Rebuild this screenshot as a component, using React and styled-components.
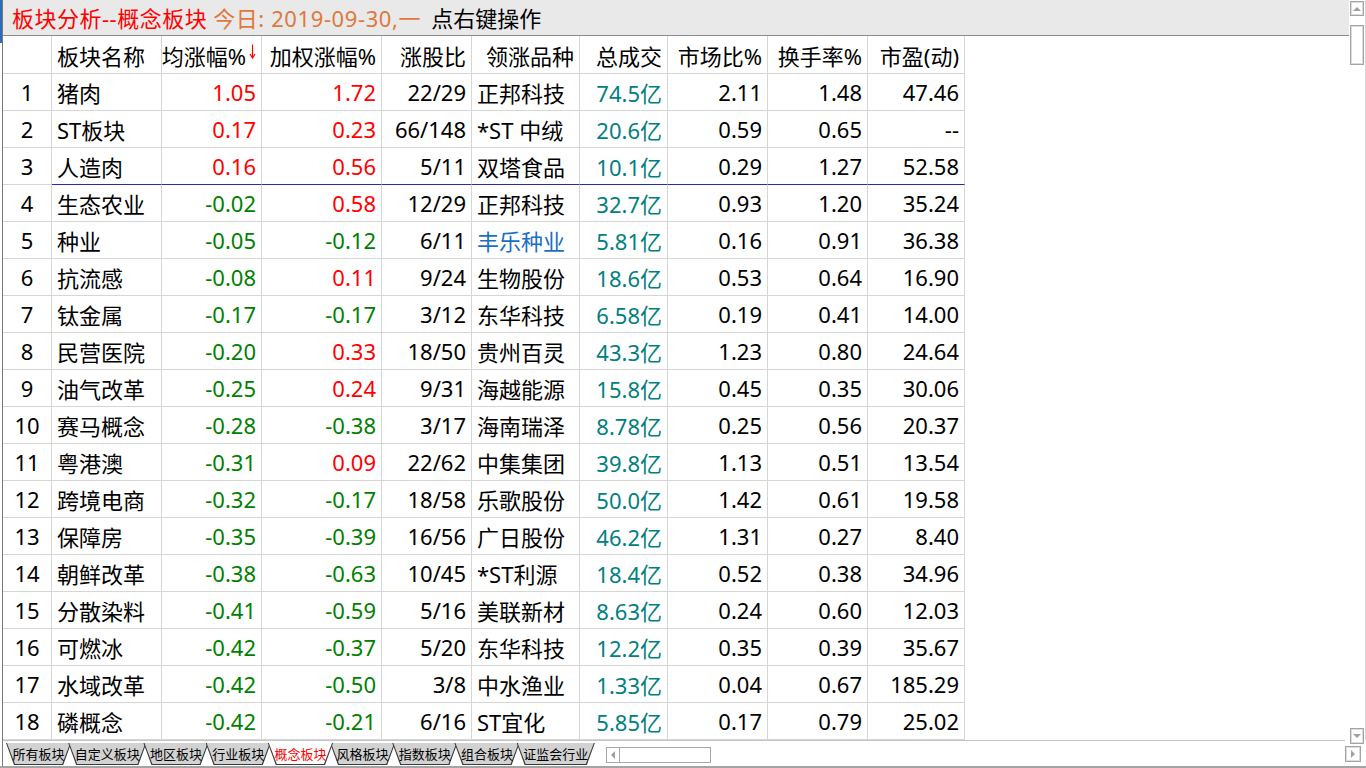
import React from "react";
import styled, { createGlobalStyle } from "styled-components";

const GlobalStyle = createGlobalStyle`
  html, body {
    margin: 0;
    padding: 0;
    background: #fff;
  }
  body {
    font-family: "Noto Sans", "Noto Sans CJK SC", sans-serif;
    overflow: hidden;
  }
`;

const RED = "#ff0000";
const GREEN = "#008000";
const TEAL = "#008080";
const LINE = "#d6d6d6";

const Screen = styled.div`
  width: 1366px;
  height: 768px;
  display: grid;
  grid-template-columns: 3px 1346px 17px;
  grid-template-rows: 36px 704px 26px 2px;
  background: #fff;
  overflow: hidden;
`;

const LeftEdge = styled.div`
  grid-column: 1;
  grid-row: 1 / 4;
  box-sizing: border-box;
  border-right: 1px solid #7a7a7a;
  background: linear-gradient(to bottom, #2c6cb4 0 43px, #fff 43px);
`;

const TitleBar = styled.div`
  grid-column: 2;
  grid-row: 1;
  box-sizing: border-box;
  border-bottom: 1px solid #8c8c8c;
  background: #e9e9e9;
  display: flex;
  align-items: center;
  padding: 0 0 1px 9px;
  font-size: 22px;
  white-space: nowrap;
`;

const TitleText = styled.span`
  color: ${(p) => p.$color};
  margin-left: ${(p) => p.$gap || 0}px;
  letter-spacing: ${(p) => p.$spacing || 0}px;
`;

const TableArea = styled.div`
  grid-column: 2;
  grid-row: 2;
  width: 962px;
`;

const COLS = "49px 110px 100px 120px 90px 108px 88px 100px 100px 97px";

const Row = styled.div`
  display: grid;
  grid-template-columns: ${COLS};
  height: ${(p) => (p.$head ? 38 : 37)}px;
`;

const Cell = styled.div`
  box-sizing: border-box;
  border-right: 1px solid ${LINE};
  border-bottom: 1px solid ${(p) => (p.$sep ? "#2b2bb0" : LINE)};
  display: flex;
  align-items: center;
  justify-content: ${(p) =>
    p.$align === "left" ? "flex-start" : p.$align === "center" ? "center" : "flex-end"};
  padding: 0 5px;
  font-size: 22px;
  color: ${(p) => p.$color || "#000"};
  white-space: nowrap;
  overflow: hidden;
`;

const SortArrow = styled.svg`
  margin-left: 3px;
  margin-bottom: 6px;
  flex-shrink: 0;
`;

const VScroll = styled.div`
  grid-column: 3;
  grid-row: 1 / 3;
  box-sizing: border-box;
  border-right: 1px solid #d8d8d8;
  display: flex;
  flex-direction: column;
  align-items: flex-start;
  padding: 1px 0 0 1px;
`;

const ScrollBox = styled.div`
  box-sizing: border-box;
  width: ${(p) => p.$w || 14}px;
  height: ${(p) => p.$h || 15}px;
  border: 1px solid #a4a4a4;
  box-shadow: inset 0 0 0 1px #dcdcdc;
  background: #fff;
  display: flex;
  align-items: center;
  justify-content: center;
  flex-shrink: 0;
`;

const Thumb = styled(ScrollBox)`
  margin-top: 9px;
`;

const DownBox = styled(ScrollBox)`
  margin-top: auto;
  margin-bottom: -4px;
  position: relative;
  z-index: 3;
`;

const Tri = styled.span`
  width: 0;
  height: 0;
  ${(p) =>
    p.$dir === "up"
      ? "border-left: 4px solid transparent; border-right: 4px solid transparent; border-bottom: 4px solid #a0a0a0;"
      : p.$dir === "down"
      ? "border-left: 4px solid transparent; border-right: 4px solid transparent; border-top: 4px solid #a0a0a0;"
      : p.$dir === "left"
      ? "border-top: 4px solid transparent; border-bottom: 4px solid transparent; border-right: 4px solid #a0a0a0;"
      : "border-top: 4px solid transparent; border-bottom: 4px solid transparent; border-left: 4px solid #a0a0a0;"}
`;

const BottomStrip = styled.div`
  grid-column: 2 / 4;
  grid-row: 3;
  display: flex;
  align-items: flex-start;
`;

const TabTrack = styled.div`
  flex: 1;
  height: 26px;
  box-sizing: border-box;
  border-top: 1px solid #c4c4c4;
  display: flex;
  align-items: flex-start;
  padding: 2px 0 0 3px;
`;

const Tab = styled.div`
  position: relative;
  z-index: ${(p) => (p.$active ? 2 : 1)};
  height: 21px;
  margin-left: ${(p) => (p.$first ? 0 : -3)}px;
  padding: 0 6.6px 1px;
  display: flex;
  align-items: center;
  font-family: "Noto Sans CJK SC", sans-serif;
  font-size: 13px;
  color: ${(p) => (p.$active ? RED : "#000")};
  background: #3a3a3a;
  clip-path: polygon(0 0, 100% 0, calc(100% - 8px) 100%, 8px 100%);

  &::before {
    content: "";
    position: absolute;
    top: 0;
    left: 1px;
    right: 1px;
    bottom: 1px;
    z-index: -1;
    background: ${(p) => (p.$active ? "#fff" : "#d2d2d2")};
    clip-path: polygon(0 0, 100% 0, calc(100% - 8px) 100%, 8px 100%);
  }
`;

const HScroll = styled.div`
  margin: 4px 0 0 11px;
  width: 105px;
  height: 16px;
  box-sizing: border-box;
  border: 1px solid #a8a8a8;
  display: flex;
`;

const HScrollBtn = styled.div`
  width: 12px;
  border-right: 1px solid #a8a8a8;
  display: flex;
  align-items: center;
  justify-content: center;
`;

const RightBtn = styled(ScrollBox)`
  margin: 6px 5px 0 0;
  width: 16px;
  height: 16px;
`;

const BottomRule = styled.div`
  grid-column: 1 / 4;
  grid-row: 4;
  background: #a4a4a4;
`;

const HEADERS = [
  { t: "", a: "center" },
  { t: "板块名称", a: "left" },
  { t: "均涨幅%", a: "right", sort: true },
  { t: "加权涨幅%", a: "right" },
  { t: "涨股比", a: "right" },
  { t: "领涨品种", a: "right" },
  { t: "总成交", a: "right" },
  { t: "市场比%", a: "right" },
  { t: "换手率%", a: "right" },
  { t: "市盈(动)", a: "right" },
];

const ROWS = [
  ["猪肉", "1.05", "1.72", "22/29", "正邦科技", "74.5亿", "2.11", "1.48", "47.46"],
  ["ST板块", "0.17", "0.23", "66/148", "*ST 中绒", "20.6亿", "0.59", "0.65", "--"],
  ["人造肉", "0.16", "0.56", "5/11", "双塔食品", "10.1亿", "0.29", "1.27", "52.58"],
  ["生态农业", "-0.02", "0.58", "12/29", "正邦科技", "32.7亿", "0.93", "1.20", "35.24"],
  ["种业", "-0.05", "-0.12", "6/11", "丰乐种业", "5.81亿", "0.16", "0.91", "36.38", "#1a6fc4"],
  ["抗流感", "-0.08", "0.11", "9/24", "生物股份", "18.6亿", "0.53", "0.64", "16.90"],
  ["钛金属", "-0.17", "-0.17", "3/12", "东华科技", "6.58亿", "0.19", "0.41", "14.00"],
  ["民营医院", "-0.20", "0.33", "18/50", "贵州百灵", "43.3亿", "1.23", "0.80", "24.64"],
  ["油气改革", "-0.25", "0.24", "9/31", "海越能源", "15.8亿", "0.45", "0.35", "30.06"],
  ["赛马概念", "-0.28", "-0.38", "3/17", "海南瑞泽", "8.78亿", "0.25", "0.56", "20.37"],
  ["粤港澳", "-0.31", "0.09", "22/62", "中集集团", "39.8亿", "1.13", "0.51", "13.54"],
  ["跨境电商", "-0.32", "-0.17", "18/58", "乐歌股份", "50.0亿", "1.42", "0.61", "19.58"],
  ["保障房", "-0.35", "-0.39", "16/56", "广日股份", "46.2亿", "1.31", "0.27", "8.40"],
  ["朝鲜改革", "-0.38", "-0.63", "10/45", "*ST利源", "18.4亿", "0.52", "0.38", "34.96"],
  ["分散染料", "-0.41", "-0.59", "5/16", "美联新材", "8.63亿", "0.24", "0.60", "12.03"],
  ["可燃冰", "-0.42", "-0.37", "5/20", "东华科技", "12.2亿", "0.35", "0.39", "35.67"],
  ["水域改革", "-0.42", "-0.50", "3/8", "中水渔业", "1.33亿", "0.04", "0.67", "185.29"],
  ["磷概念", "-0.42", "-0.21", "6/16", "ST宜化", "5.85亿", "0.17", "0.79", "25.02"],
];

const TABS = ["所有板块", "自定义板块", "地区板块", "行业板块", "概念板块", "风格板块", "指数板块", "组合板块", "证监会行业"];

const changeColor = (v) => (v.startsWith("-") ? GREEN : parseFloat(v) === 0 ? "#000" : RED);

const App = () => {
  return (
    <Screen>
      <GlobalStyle />
      <LeftEdge />
      <TitleBar>
        <TitleText $color={RED} $spacing={0.5}>板块分析--概念板块</TitleText>
        <TitleText $color="#e0783c" $gap={6} $spacing={0.6}>今日: 2019-09-30,一</TitleText>
        <TitleText $color="#000" $gap={10}>点右键操作</TitleText>
      </TitleBar>

      <TableArea>
        <Row $head>
          {HEADERS.map((h, i) => (
            <Cell key={i} $align={h.a}>
              {h.t}
              {h.sort && (
                <SortArrow width="7" height="15" viewBox="0 0 7 15">
                  <path d="M3.5 0.5V13.5M1 10L3.5 14L6 10" stroke={RED} strokeWidth="1.2" fill="none" />
                </SortArrow>
              )}
            </Cell>
          ))}
        </Row>
        {ROWS.map((r, i) => {
          const sep = i === 2;
          return (
            <Row key={i}>
              <Cell $align="center">{i + 1}</Cell>
              <Cell $align="left" $sep={sep}>{r[0]}</Cell>
              <Cell $sep={sep} $color={changeColor(r[1])}>{r[1]}</Cell>
              <Cell $sep={sep} $color={changeColor(r[2])}>{r[2]}</Cell>
              <Cell $sep={sep}>{r[3]}</Cell>
              <Cell $align="left" $sep={sep} $color={r[9]}>{r[4]}</Cell>
              <Cell $sep={sep} $color={TEAL}>{r[5]}</Cell>
              <Cell $sep={sep}>{r[6]}</Cell>
              <Cell $sep={sep}>{r[7]}</Cell>
              <Cell $sep={sep}>{r[8]}</Cell>
            </Row>
          );
        })}
      </TableArea>

      <VScroll>
        <ScrollBox $h={15}>
          <Tri $dir="up" />
        </ScrollBox>
        <Thumb $h={40} />
        <DownBox $h={16}>
          <Tri $dir="down" />
        </DownBox>
      </VScroll>

      <BottomStrip>
        <TabTrack>
          {TABS.map((t, i) => (
            <Tab key={t} $first={i === 0} $active={t === "概念板块"}>
              {t}
            </Tab>
          ))}
          <HScroll>
            <HScrollBtn>
              <Tri $dir="left" />
            </HScrollBtn>
          </HScroll>
        </TabTrack>
        <RightBtn>
          <Tri $dir="right" />
        </RightBtn>
      </BottomStrip>

      <BottomRule />
    </Screen>
  );
};

export default App;
